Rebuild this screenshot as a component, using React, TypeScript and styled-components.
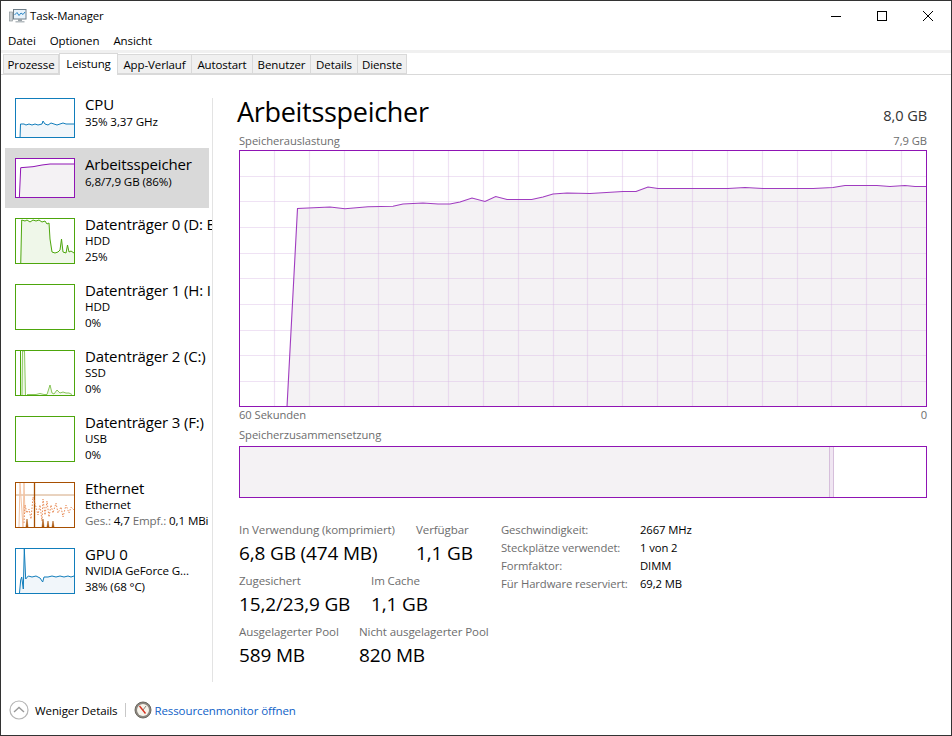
import React from 'react';
import styled, { createGlobalStyle } from 'styled-components';

const PURPLE = '#8f14b4';
const BLUE = '#117dbb';
const GREEN = '#4da60c';
const BROWN = '#a74f01';

const GlobalStyle = createGlobalStyle`
  html, body { margin: 0; padding: 0; background: #fff; }
  body { font-family: "Open Sans", "Noto Sans", "Liberation Sans", sans-serif; color: #000; }
  * { box-sizing: border-box; }
`;

const memLine =
  '48,257 58.5,58.5 91,57 106,58.7 129,56.7 154,56.3 164,54 184,53 199,54 211,54 221,52 233,48 246,51.5 256.7,46.5 268,49.5 292.7,49.5 304,47 314,44 328,43 351,43.5 384,41.5 397,41.5 409,37 419,38.5 489,38.5 506,37.5 524,38.5 574,38.5 594,37.5 606,35.5 638,35.5 651,36.5 666,35.5 676,36.5 688,36.5';

const tabs = [
  { label: 'Prozesse', width: 56 },
  { label: 'Leistung', width: 59, active: true },
  { label: 'App-Verlauf', width: 74 },
  { label: 'Autostart', width: 61 },
  { label: 'Benutzer', width: 58 },
  { label: 'Details', width: 47 },
  { label: 'Dienste', width: 49 },
];

const Page = styled.div`
  width: 952px;
  height: 736px;
  border: 1px solid #333;
  display: flex;
  flex-direction: column;
  overflow: hidden;
  background: #fff;
`;

const TitleBar = styled.div`
  height: 30px;
  flex: none;
  display: flex;
  align-items: center;
  padding-left: 8px;
  font-size: 11.4px;
  letter-spacing: -0.1px;
`;

const TitleText = styled.span`
  margin: -2px 0 0 3px;
  flex: 1;
`;

const WinButton = styled.div`
  width: 46px;
  height: 30px;
  display: flex;
  align-items: center;
  justify-content: center;
`;

const WinButtons = styled.div`
  display: flex;
`;

const MenuBar = styled.div`
  height: 19px;
  flex: none;
  display: flex;
  align-items: center;
  gap: 14px;
  padding-left: 7px;
  font-size: 11.5px;
  letter-spacing: -0.1px;
`;

const TabStrip = styled.div`
  height: 25px;
  flex: none;
  display: flex;
  align-items: flex-end;
  padding-left: 2px;
  border-top: 3px solid #f0f0f0;
  border-bottom: 1px solid #d9d9d9;
  position: relative;
`;

const Tab = styled.div<{ $w: number; $active?: boolean }>`
  width: ${(p) => p.$w}px;
  height: ${(p) => (p.$active ? 22 : 20)}px;
  margin-bottom: ${(p) => (p.$active ? -1 : 0)}px;
  padding: ${(p) => (p.$active ? '0 0 2px' : '1px 0 0')};
  display: flex;
  align-items: center;
  justify-content: center;
  font-size: 11.5px;
  letter-spacing: -0.1px;
  background: ${(p) => (p.$active ? '#fff' : '#f0f0f0')};
  border: 1px solid #d9d9d9;
  border-bottom: ${(p) => (p.$active ? 'none' : '1px solid #d9d9d9')};
  border-left: ${(p) => (p.$active ? '1px solid #d9d9d9' : 'none')};
  &:first-child { border-left: 1px solid #d9d9d9; }
`;

const Body = styled.div`
  flex: 1;
  display: flex;
  min-height: 0;
`;

const Sidebar = styled.div`
  width: 212px;
  flex: none;
  margin-top: 23px;
  height: 584px;
  padding-left: 4px;
  border-right: 1px solid #e3e3e3;
  overflow: hidden;
  display: flex;
  flex-direction: column;
`;

const Row = styled.div<{ $selected?: boolean; $h: number; $pt?: number }>`
  width: 204px;
  height: ${(p) => p.$h}px;
  flex: none;
  display: flex;
  align-items: flex-start;
  padding: ${(p) => p.$pt ?? 0}px 0 0 10px;
  background: ${(p) => (p.$selected ? '#d9d9d9' : 'transparent')};
`;

const Thumb = styled.div<{ $color: string; $h: number }>`
  width: 60px;
  height: ${(p) => p.$h}px;
  flex: none;
  border: 1px solid ${(p) => p.$color};
  overflow: hidden;
  background: #fff;
`;

const ThumbSvg = styled.svg`
  display: block;
  width: 58px;
  height: 100%;
`;

const RowText = styled.div`
  margin-left: 10px;
  width: 128px;
  flex: none;
  white-space: nowrap;
`;

const RowTitle = styled.div<{ $tight?: boolean }>`
  font-size: 15px;
  line-height: 20px;
  letter-spacing: -0.15px;
  margin-top: -4px;
  margin-bottom: ${(p) => (p.$tight ? -1 : 0)}px;
`;

const RowSub = styled.div`
  font-size: 11.6px;
  line-height: 16px;
  letter-spacing: -0.12px;
`;

const Muted = styled.span`
  color: #6d6d6d;
`;

const Main = styled.div`
  flex: 1;
  padding: 18px 24px 0 26px;
  min-width: 0;
  display: flex;
  flex-direction: column;
`;

const Header = styled.div`
  display: flex;
  justify-content: space-between;
  align-items: flex-end;
  height: 36px;
  margin-left: -2px;
`;

const Heading = styled.div`
  font-size: 27px;
  line-height: 34px;
  letter-spacing: -0.3px;
`;

const Capacity = styled.div`
  font-size: 14.6px;
  line-height: 18px;
  letter-spacing: -0.1px;
  color: #333;
  margin-bottom: 5px;
`;

const CaptionRow = styled.div<{ $mt?: number }>`
  display: flex;
  justify-content: space-between;
  height: 16px;
  margin-top: ${(p) => p.$mt ?? 0}px;
  font-size: 11.2px;
  line-height: 16px;
  letter-spacing: -0.05px;
  color: #6d6d6d;
`;

const Graph = styled.div`
  width: 688px;
  height: 257px;
  margin-top: 1px;
  border: 1px solid ${PURPLE};
  flex: none;
  overflow: hidden;
`;

const GraphSvg = styled.svg`
  display: block;
  margin: -1px;
`;

const Composition = styled.div`
  width: 688px;
  height: 52px;
  margin-top: 3px;
  border: 1px solid ${PURPLE};
  display: flex;
  flex: none;
`;

const CompInUse = styled.div`
  width: 590px;
  background: #f4f2f4;
  border-right: 1px solid #d6bfdb;
`;

const CompModified = styled.div`
  width: 4px;
  background: #f0e6f2;
  border-right: 1px solid #d6bfdb;
`;

const Stats = styled.div`
  display: flex;
  margin-top: 24px;
`;

const StatColumn = styled.div`
  width: 262px;
  display: flex;
  flex-direction: column;
  gap: 5px;
`;

const StatRow = styled.div`
  display: flex;
`;

const Stat = styled.div<{ $w: number }>`
  width: ${(p) => p.$w}px;
  flex: none;
  white-space: nowrap;
`;

const StatLabel = styled.div`
  font-size: 11.55px;
  line-height: 16px;
  letter-spacing: -0.1px;
  color: #6d6d6d;
`;

const StatValue = styled.div`
  font-size: 19px;
  line-height: 30px;
  letter-spacing: -0.15px;
`;

const InfoGrid = styled.div`
  display: grid;
  grid-template-columns: 139px auto;
  grid-auto-rows: 18px;
  font-size: 11.3px;
  line-height: 18px;
  letter-spacing: -0.1px;
  white-space: nowrap;
  margin-top: -1px;
`;

const InfoKey = styled.div`
  color: #6d6d6d;
`;

const Footer = styled.div`
  height: 50px;
  flex: none;
  display: flex;
  align-items: center;
  padding: 0 0 0 8px;
  font-size: 11.5px;
  letter-spacing: -0.1px;
`;

const FooterLabel = styled.span`
  margin-left: 6px;
`;

const FooterDivider = styled.div`
  width: 1px;
  height: 14px;
  background: #c8c8c8;
  margin: 0 8px 0 7px;
`;

const FooterLink = styled.span`
  color: #0f5fc7;
  margin-left: 3px;
`;

const AppIcon = () => (
  <svg width="18" height="16" viewBox="0 0 18 16">
    <rect x="0.5" y="4" width="3" height="9" fill="#c9ced2" stroke="#8f979c" strokeWidth="0.7" />
    <rect x="4.5" y="1.5" width="12.5" height="9.5" fill="#e8f2fa" stroke="#6f7f8a" />
    <polyline points="5.5,7 8,4.5 10,7.5 12,5 14,6.5 16,4" fill="none" stroke="#2b86c5" strokeWidth="1" />
    <rect x="9" y="11" width="4" height="2" fill="#9aa3a8" />
    <rect x="6.5" y="13" width="9" height="1.5" fill="#b5bcc0" />
  </svg>
);

const MinimizeIcon = () => (
  <svg width="10" height="10" viewBox="0 0 10 10">
    <rect x="0" y="5" width="10" height="1" fill="#000" />
  </svg>
);

const MaximizeIcon = () => (
  <svg width="10" height="10" viewBox="0 0 10 10">
    <rect x="0.5" y="0.5" width="9" height="9" fill="none" stroke="#000" />
  </svg>
);

const CloseIcon = () => (
  <svg width="10" height="10" viewBox="0 0 10 10">
    <path d="M0 0 L10 10 M10 0 L0 10" stroke="#000" strokeWidth="1" />
  </svg>
);

const ChevronCircle = () => (
  <svg width="20" height="20" viewBox="0 0 20 20">
    <circle cx="10" cy="10" r="9" fill="#fff" stroke="#b4b4b4" strokeWidth="1.2" />
    <polyline points="5,12 10,7.5 15,12" fill="none" stroke="#9a9a9a" strokeWidth="1.4" />
  </svg>
);

const MonitorIcon = () => (
  <svg width="18" height="18" viewBox="0 0 18 18">
    <circle cx="9" cy="9" r="8" fill="#8b8780" stroke="#6c6860" />
    <circle cx="9" cy="9" r="6" fill="#f6f3ea" />
    <path d="M5.5 5 L11.5 12.5" stroke="#d8311f" strokeWidth="1.4" />
    <path d="M12 5 L9 9" stroke="#6c6860" strokeWidth="0.8" />
  </svg>
);

type SparkProps = { color: string; fill: string; h: number; points: string };

const Spark = ({ color, fill, h, points }: SparkProps) => (
  <Thumb $color={color} $h={h}>
    <ThumbSvg viewBox={`0 0 58 ${h - 2}`}>
      {points && <polygon points={`${points} 58,${h} 4,${h}`} fill={fill} />}
      {points && <polyline points={points} fill="none" stroke={color} strokeWidth="1" />}
    </ThumbSvg>
  </Thumb>
);

const EthernetThumb = () => (
  <Thumb $color={BROWN} $h={46}>
    <ThumbSvg viewBox="0 0 58 44">
      <line x1="0" y1="12" x2="58" y2="12" stroke="#d3a67f" />
      <polyline points="3,44 4,0 7,44 8,0 9,30" fill="none" stroke="#f3c3a3" />
      <line x1="18.5" y1="0" x2="18.5" y2="44" stroke={BROWN} strokeWidth="1.3" />
      <polyline
        points="8,40 9,22 11,30 13,26 15,36 17,14 20,24 22,32 24,22 26,38 27,16 29,32 31,18 33,34 35,22 37,30 40,20 42,30 45,24 47,34 50,22 53,30 55,24 58,27"
        fill="none"
        stroke="#e88a55"
        strokeWidth="1"
        strokeDasharray="1.5 1.5"
      />
      <path d="M10 44 L11 36 L12 44 M26 44 L27 36 L28 44 M31 44 L32 38 L33 44 M36 44 L37 38 L38 44" fill={BROWN} stroke={BROWN} strokeWidth="0.5" />
    </ThumbSvg>
  </Thumb>
);

const Disk2Thumb = () => (
  <Thumb $color={GREEN} $h={46}>
    <ThumbSvg viewBox="0 0 58 44">
      <polygon points="5,44 6,0 8.5,0 9.5,44" fill="#eff7e9" />
      <line x1="4.5" y1="0" x2="4.5" y2="44" stroke={GREEN} />
      <polyline points="6,44 6.5,0 8.5,0 9.5,44" fill="none" stroke="#8cc860" strokeWidth="1" />
      <polyline
        points="11,43.5 20,43.5 24,42.5 28,43.5 31,43.5 34,34 36,42 38,43 41,39 44,42 47,41 50,42 53,42 56,43.5"
        fill="#eff7e9"
        stroke="#6db733"
        strokeWidth="0.8"
      />
    </ThumbSvg>
  </Thumb>
);

const MemoryGraph = () => {
  const cols = Array.from({ length: 19 }, (_, i) => Math.round(34.8 + i * 34.85) + 0.5);
  const rows = Array.from({ length: 9 }, (_, i) => Math.round(25.7 + i * 25.65) + 0.5);
  return (
    <GraphSvg width="688" height="257" viewBox="0 0 688 257">
      <polygon points={`${memLine} 688,257`} fill="#f4f2f4" />
      {cols.map((x) => (
        <line key={x} x1={x} y1="0" x2={x} y2="257" stroke="#d9b9e4" strokeOpacity="0.42" strokeWidth="1.2" />
      ))}
      {rows.map((y) => (
        <line key={y} x1="0" y1={y} x2="688" y2={y} stroke="#d9b9e4" strokeOpacity="0.42" strokeWidth="1.2" />
      ))}
      <polyline points={memLine} fill="none" stroke="#a03cc0" strokeWidth="1.1" />
    </GraphSvg>
  );
};

export default function App() {
  return (
    <>
      <GlobalStyle />
      <Page>
        <TitleBar>
          <AppIcon />
          <TitleText>Task-Manager</TitleText>
          <WinButtons>
            <WinButton><MinimizeIcon /></WinButton>
            <WinButton><MaximizeIcon /></WinButton>
            <WinButton><CloseIcon /></WinButton>
          </WinButtons>
        </TitleBar>
        <MenuBar>
          <span>Datei</span>
          <span>Optionen</span>
          <span>Ansicht</span>
        </MenuBar>
        <TabStrip>
          {tabs.map((t) => (
            <Tab key={t.label} $w={t.width} $active={t.active}>{t.label}</Tab>
          ))}
        </TabStrip>
        <Body>
          <Sidebar>
            <Row $h={50}>
              <Spark color={BLUE} fill="#f1f6fa" h={40} points="4,40 4.5,25 8,25 10,26 13,25 16,26 19,25 22,26 26,25 27,22 29,25 32,26 35,24 38,25 41,26 44,25 47,24 50,25 53,25 58,25" />
              <RowText>
                <RowTitle>CPU</RowTitle>
                <RowSub>35% 3,37 GHz</RowSub>
              </RowText>
            </Row>
            <Row $h={60} $pt={10} $selected>
              <Spark color={PURPLE} fill="#f4f2f4" h={40} points="3.3,40 4.7,8.7 17,7.7 26,6 34,5 58,5" />
              <RowText>
                <RowTitle>Arbeitsspeicher</RowTitle>
                <RowSub>6,8/7,9 GB (86%)</RowSub>
              </RowText>
            </Row>
            <Row $h={76} $pt={10}>
              <Spark color={GREEN} fill="#eff7e9" h={46} points="4.7,46 5.7,1 9,2 11,1 14,3 17,1 20,2 23,1 26,3 29,2 31,5 33,4 34,20 36,33 39,34 42,33 44,31 45.5,20 47,33 50,34 51.5,26 53,33 55,32 58,34" />
              <RowText>
                <RowTitle $tight>Datenträger 0 (D: E</RowTitle>
                <RowSub>HDD</RowSub>
                <RowSub>25%</RowSub>
              </RowText>
            </Row>
            <Row $h={66}>
              <Spark color={GREEN} fill="#eff7e9" h={46} points="" />
              <RowText>
                <RowTitle $tight>Datenträger 1 (H: I</RowTitle>
                <RowSub>HDD</RowSub>
                <RowSub>0%</RowSub>
              </RowText>
            </Row>
            <Row $h={66}>
              <Disk2Thumb />
              <RowText>
                <RowTitle $tight>Datenträger 2 (C:)</RowTitle>
                <RowSub>SSD</RowSub>
                <RowSub>0%</RowSub>
              </RowText>
            </Row>
            <Row $h={66}>
              <Spark color={GREEN} fill="#eff7e9" h={46} points="" />
              <RowText>
                <RowTitle $tight>Datenträger 3 (F:)</RowTitle>
                <RowSub>USB</RowSub>
                <RowSub>0%</RowSub>
              </RowText>
            </Row>
            <Row $h={66}>
              <EthernetThumb />
              <RowText>
                <RowTitle $tight>Ethernet</RowTitle>
                <RowSub>Ethernet</RowSub>
                <RowSub><Muted>Ges.:</Muted> 4,7 <Muted>Empf.:</Muted> 0,1 MBi</RowSub>
              </RowText>
            </Row>
            <Row $h={66}>
              <Spark color={BLUE} fill="#f1f6fa" h={46} points="3.3,46 4.7,31 5.7,28 7.3,40 8.3,0 9.7,30 12.3,27 16,28 20,27 24,29 26.7,33 28,28 32,28 36,27 40,28 44,27 48,28 52,27 55,28 58,27" />
              <RowText>
                <RowTitle $tight>GPU 0</RowTitle>
                <RowSub>NVIDIA GeForce G...</RowSub>
                <RowSub>38% (68 °C)</RowSub>
              </RowText>
            </Row>
          </Sidebar>
          <Main>
            <Header>
              <Heading>Arbeitsspeicher</Heading>
              <Capacity>8,0 GB</Capacity>
            </Header>
            <CaptionRow $mt={4}>
              <span>Speicherauslastung</span>
              <span>7,9 GB</span>
            </CaptionRow>
            <Graph><MemoryGraph /></Graph>
            <CaptionRow>
              <span>60 Sekunden</span>
              <span>0</span>
            </CaptionRow>
            <CaptionRow $mt={4}>
              <span>Speicherzusammensetzung</span>
            </CaptionRow>
            <Composition>
              <CompInUse />
              <CompModified />
            </Composition>
            <Stats>
              <StatColumn>
                <StatRow>
                  <Stat $w={177}>
                    <StatLabel>In Verwendung (komprimiert)</StatLabel>
                    <StatValue>6,8 GB (474 MB)</StatValue>
                  </Stat>
                  <Stat $w={70}>
                    <StatLabel>Verfügbar</StatLabel>
                    <StatValue>1,1 GB</StatValue>
                  </Stat>
                </StatRow>
                <StatRow>
                  <Stat $w={132}>
                    <StatLabel>Zugesichert</StatLabel>
                    <StatValue>15,2/23,9 GB</StatValue>
                  </Stat>
                  <Stat $w={70}>
                    <StatLabel>Im Cache</StatLabel>
                    <StatValue>1,1 GB</StatValue>
                  </Stat>
                </StatRow>
                <StatRow>
                  <Stat $w={120}>
                    <StatLabel>Ausgelagerter Pool</StatLabel>
                    <StatValue>589 MB</StatValue>
                  </Stat>
                  <Stat $w={130}>
                    <StatLabel>Nicht ausgelagerter Pool</StatLabel>
                    <StatValue>820 MB</StatValue>
                  </Stat>
                </StatRow>
              </StatColumn>
              <InfoGrid>
                <InfoKey>Geschwindigkeit:</InfoKey><div>2667 MHz</div>
                <InfoKey>Steckplätze verwendet:</InfoKey><div>1 von 2</div>
                <InfoKey>Formfaktor:</InfoKey><div>DIMM</div>
                <InfoKey>Für Hardware reserviert:</InfoKey><div>69,2 MB</div>
              </InfoGrid>
            </Stats>
          </Main>
        </Body>
        <Footer>
          <ChevronCircle />
          <FooterLabel>Weniger Details</FooterLabel>
          <FooterDivider />
          <MonitorIcon />
          <FooterLink>Ressourcenmonitor öffnen</FooterLink>
        </Footer>
      </Page>
    </>
  );
}
